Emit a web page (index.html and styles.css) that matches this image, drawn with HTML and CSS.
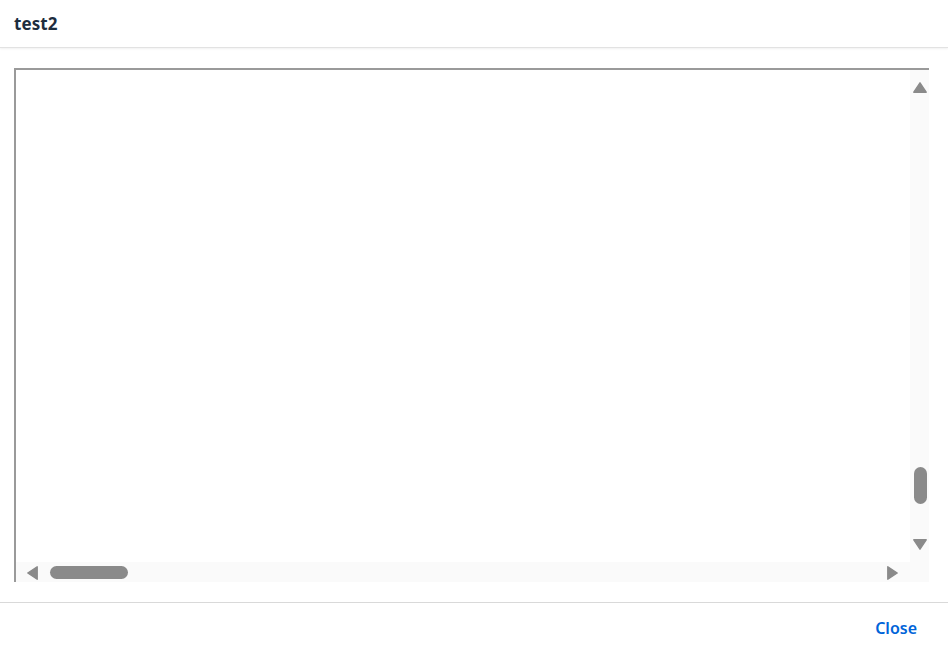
FILE: index.html
```html
<!DOCTYPE html>
<html>
<head>
<meta charset="utf-8">
<link rel="stylesheet" href="styles.css">
</head>
<body>
<div class="dialog">
  <header class="dlg-header">
    <h1 class="dlg-title">test2</h1>
  </header>
  <main class="dlg-content">
    <div class="frame">
      <div class="frame-view"></div>
      <div class="vbar">
        <svg class="arrow" width="14" height="11" viewBox="0 0 14 11"><path d="M7 0.8 L13.2 10.2 L0.8 10.2 Z" fill="#8a8a8a" stroke="#8a8a8a" stroke-width="1.4" stroke-linejoin="round"/></svg>
        <div class="vthumb"></div>
        <svg class="arrow down" width="14" height="11" viewBox="0 0 14 11"><path d="M0.8 0.8 L13.2 0.8 L7 10.2 Z" fill="#8a8a8a" stroke="#8a8a8a" stroke-width="1.4" stroke-linejoin="round"/></svg>
      </div>
      <div class="hbar">
        <svg class="arrow" width="11" height="14" viewBox="0 0 11 14"><path d="M10.2 0.8 L10.2 13.2 L0.8 7 Z" fill="#8a8a8a" stroke="#8a8a8a" stroke-width="1.4" stroke-linejoin="round"/></svg>
        <div class="hthumb"></div>
        <svg class="arrow right" width="11" height="14" viewBox="0 0 11 14"><path d="M0.8 0.8 L10.2 7 L0.8 13.2 Z" fill="#8a8a8a" stroke="#8a8a8a" stroke-width="1.4" stroke-linejoin="round"/></svg>
      </div>
      <div class="corner"></div>
    </div>
  </main>
  <footer class="dlg-footer">
    <button class="btn-close">Close</button>
  </footer>
</div>
</body>
</html>
```
FILE: styles.css
```css
html, body {
  margin: 0;
  padding: 0;
  background: #ffffff;
}
body {
  width: 948px;
  height: 650px;
  overflow: hidden;
  font-family: "Noto Sans", "Liberation Sans", sans-serif;
}
.dialog {
  display: flex;
  flex-direction: column;
  height: 650px;
  background: #ffffff;
}
.dlg-header {
  height: 47px;
  flex: none;
  display: flex;
  align-items: center;
  padding-left: 14px;
  border-bottom: 1px solid #e2e2e2;
  box-shadow: 0 1px 2px rgba(0,0,0,0.06);
  position: relative;
  z-index: 1;
}
.dlg-title {
  margin: 0;
  font-size: 17px;
  font-weight: 700;
  color: #1d2d3e;
  margin-top: -1px;
  letter-spacing: 0.1px;
}
.dlg-content {
  flex: 1;
  padding: 20px 19px 20px 14px;
  display: flex;
}
.frame {
  flex: 1;
  border-top: 2px solid #9a9a9a;
  border-left: 2px solid #9a9a9a;
  display: grid;
  grid-template-columns: 1fr 19px;
  grid-template-rows: 1fr 20px;
  background: #ffffff;
}
.frame-view {
  background: #ffffff;
}
.vbar {
  background: #fafafa;
  display: flex;
  flex-direction: column;
  align-items: center;
  padding: 12px 0 12px 1px;
}
.vthumb {
  width: 13px;
  height: 37px;
  border-radius: 7px;
  background: #8a8a8a;
  margin-top: auto;
}
.arrow.down {
  margin-top: 35px;
}
.hbar {
  background: #fafafa;
  display: flex;
  align-items: center;
  padding: 1px 12px 0 11px;
}
.hthumb {
  width: 78px;
  height: 13px;
  border-radius: 7px;
  background: #8a8a8a;
  margin-left: 12px;
}
.arrow.right {
  margin-left: auto;
}
.arrow {
  display: block;
  flex: none;
}
.corner {
  background: #fafafa;
}
.dlg-footer {
  height: 47px;
  flex: none;
  border-top: 1px solid #d9d9d9;
  display: flex;
  align-items: center;
  justify-content: flex-end;
  padding-right: 23px;
}
.btn-close {
  border: none;
  background: transparent;
  font-family: "Noto Sans", "Liberation Sans", sans-serif;
  font-size: 16px;
  font-weight: 600;
  color: #0064d9;
  padding: 0 8px;
  height: 36px;
  margin-top: 2px;
  cursor: pointer;
}
```
